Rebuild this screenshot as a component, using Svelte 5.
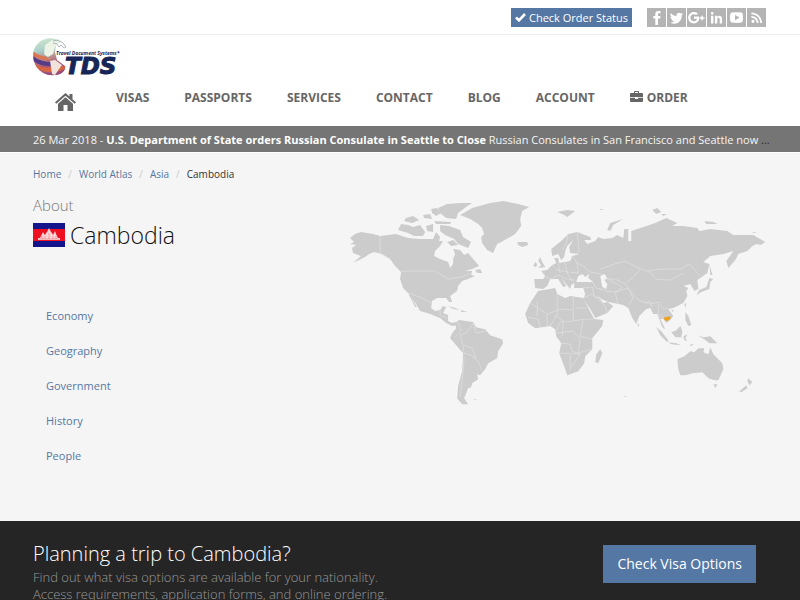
<script>
    const navItems = ["VISAS", "PASSPORTS", "SERVICES", "CONTACT", "BLOG", "ACCOUNT"];

    const social = [
        {
            name: "Facebook",
            path: "M11 17V10.600H13.200L13.500 8H11V6.500C11 5.700 11.300 5.300 12.200 5.300H13.500V3H11.500C9.200 3 8.300 4.200 8.300 6.100V8H6.300V10.600H8.300V17Z",
        },
        {
            name: "Twitter",
            path: "M16 6C15.500 6.300 15 6.400 14.400 6.500C15 6.100 15.400 5.600 15.600 4.900L13.800 5.600C11.900 3.700 8.900 5.200 9.500 8C7.200 7.900 5.200 6.900 3.800 5.100C3 6.500 3.500 8.200 4.700 9L3.500 8.700C3.500 10.100 4.400 11.200 5.700 11.600H4.500C4.900 12.600 5.800 13.300 7 13.400C5.900 14.200 4.600 14.500 3.200 14.400C8.600 17.700 14.900 14 14.700 7.400Z",
        },
        {
            name: "Google Plus",
            path: "M7 8.600H12.300C13 12.300 10.700 15.400 7 15.400C3.600 15.400 1.200 12.900 1.200 9.700C1.200 6.500 3.700 4 7 4C8.500 4 9.800 4.500 10.800 5.500L9.200 7C6.900 5 3.400 6.700 3.400 9.700C3.400 13.700 9.100 14.600 10 10.700H7ZM14.400 7.700H16V9.200H17.600V10.700H16V12.300H14.400V10.700H12.900V9.200H14.400Z",
        },
        {
            name: "LinkedIn",
            path: "M4 7.800H6.400V15.500H4ZM5.200 4A1.300 1.300 0 1 1 5.200 6.700A1.300 1.300 0 1 1 5.200 4ZM7.900 7.800H10.200V8.900C11.300 7 15.100 7.100 15.100 10.900V15.500H12.700V11.400C12.700 9 10.300 9.200 10.300 11.300V15.500H7.900Z",
        },
        {
            name: "YouTube",
            path: "M4.500 4.600Q9.500 3.900 14.500 4.600Q16 4.900 16 9.600Q16 14.300 14.500 14.600Q9.500 15.300 4.500 14.600Q3 14.300 3 9.600Q3 4.900 4.500 4.600ZM8 6.900V12.200L12.600 9.600Z",
        },
        {
            name: "RSS",
            path: "M6 11.700A1.600 1.600 0 1 1 6 14.900A1.600 1.600 0 1 1 6 11.700ZM4.400 8V9.800C7.500 9.900 9.600 12 9.800 15H11.600C11.400 11 8.500 8.100 4.400 8ZM4.400 4.500V6.300C9.500 6.500 13 10 13.200 15H15C14.800 9 10.400 4.700 4.400 4.500Z",
        },
    ];

    const crumbs = ["Home", "World Atlas", "Asia"];
    const topics = ["Economy", "Geography", "Government", "History", "People"];

    const land = [
        // north and central america
        "M350 237L355 233L361 231L373 233L380 235L388 234L396 233L402 235L408 237L420 238L433 238L436 231L440 236L439 240L443 240L440 245L435 250L434 255L440 258L448 261L450 267L453 263L453 258L455 253L453 248L460 249L464 254L468 252L473 258L479 265L472 268L465 270L472 270L471 274L475 275L468 278L462 280L458 285L457 290L450 295L452 301L449 301L446 297L437 297L432 300L431 307L435 310L440 309L443 305L446 306L443 312L448 314L448 320L452 322L455 321L458 324L452 325L446 322L440 317L430 313L420 310L416 303L411 297L417 306L415 306L408 292L403 287L400 278L401 271L395 265L390 258L382 253L374 251L369 253L365 256L353 262L361 255L353 252L352 247L356 244L350 243L354 241Z",
        // arctic islands
        "M398 229L401 223L408 224L413 226L420 224L425 231L423 235L414 235L408 232Z",
        "M406 217L413 215L419 219L412 222L404 220ZM423 214L430 213L432 218L424 217ZM426 225L433 223L433 231L427 230ZM434 220L451 221L450 223L436 223Z",
        "M438 207L447 203L460 202L472 202L466 206L458 212L456 218L446 217L440 212Z",
        "M440 224L449 225L460 229L463 236L471 241L468 247L458 243L454 238L445 234L440 230ZM447 241L453 239L458 244L451 245Z",
        "M431 208L437 207L441 212L436 215L432 212ZM475 269L480 268L482 272L477 272Z",
        // greenland and iceland
        "M460 214L472 207L490 202L503 200L518 203L529 206L522 210L520 218L521 225L515 233L503 240L497 243L493 252L487 249L482 242L481 236L484 233L482 227L478 223L470 218Z",
        "M517 241L527 241L528 244L522 246L518 244ZM448 305L455 307L460 309L453 308ZM461 309L467 311L461 311Z",
        // south america
        "M455 322L459 319L466 320L473 321L476 326L485 328L490 334L502 338L503 342L498 350L497 357L488 362L485 368L480 374L477 373L478 378L472 382L471 386L468 387L466 392L464 397L468 403L462 403L457 397L458 385L462 370L463 352L457 345L450 337L452 332L456 327Z",
        // africa and madagascar
        "M538 290L555 287L557 293L565 297L570 295L583 297L588 307L594 318L603 319L602 325L592 337L592 348L585 355L584 362L578 370L567 374L565 368L562 360L559 352L561 342L556 335L555 328L550 325L535 327L528 322L525 313L530 302ZM600 348L602 352L598 362L595 361L596 353Z",
        // europe and asia
        "M534 278L543 278L545 275L541 270L547 269L552 264L556 262L554 257L558 257L559 262L570 260L572 255L579 253L570 252L569 246L573 239L567 245L565 250L564 256L561 259L558 253L552 255L551 248L561 240L568 233L577 231L590 236L591 239L584 239L587 243L595 240L598 236L603 238L612 237L617 234L623 237L624 228L628 228L628 240L631 240L631 230L640 227L655 222L666 217L677 222L672 225L683 225L697 227L699 230L710 228L727 230L733 234L753 234L765 241L760 244L756 243L752 245L747 250L738 253L735 259L728 267L726 260L733 250L723 253L710 255L703 261L709 263L707 272L700 277L697 279L698 288L694 290L690 283L683 285L688 287L686 290L687 295L683 302L673 307L668 308L673 315L670 319L666 322L663 318L660 318L665 328L662 326L657 313L653 313L650 307L646 308L639 315L636 323L632 317L628 307L623 304L608 301L601 298L597 294L603 302L607 301L613 305L607 312L595 317L590 308L583 298L585 293L583 287L574 287L574 282L571 284L570 288L561 277L566 285L563 286L558 278L550 278L547 285L543 288L535 287Z",
        // british isles, svalbard, novaya zemlya, severnaya
        "M540 256L542 261L545 266L538 267L541 264L538 260ZM535 261L537 263L536 266L533 265ZM557 211L567 209L575 210L567 216L564 214ZM607 229L610 222L623 218L613 224L610 230ZM652 209L657 207L661 211L656 213ZM704 220L713 221L717 223L706 223ZM752 231L757 231L753 232ZM599 208L604 208L600 209ZM661 213L667 213L663 215Z",
        // japan, sakhalin, taiwan, philippines, sri lanka
        "M709 263L712 274L710 274ZM709 277L713 278L710 281L709 288L701 291L696 294L699 289L706 286ZM684 303L686 302L685 307ZM685 311L688 315L691 324L688 325L685 319ZM637 322L639 324L638 326ZM671 309L674 309L672 311Z",
        // indonesia and new guinea
        "M656 326L661 330L668 339L667 341L660 334ZM668 341L676 342L681 344L671 343ZM671 331L676 329L680 325L682 330L681 336L675 336ZM683 335L687 333L685 337L687 340L684 339ZM697 334L703 336L710 335L717 342L709 342L704 338ZM690 343L694 343L690 345Z",
        // australia, tasmania, new zealand
        "M677 358L684 355L690 350L694 351L698 347L704 347L703 351L708 353L710 346L713 353L718 358L722 362L723 368L718 379L714 379L708 377L705 374L702 371L692 372L685 374L680 374L678 368ZM713 383L717 383L715 387ZM748 377L752 381L749 384L747 380ZM746 384L747 387L741 391L739 390ZM474 398L477 398L474 399ZM624 395L627 395L625 396Z",
    ];

    const borders = [
        "M380 235V253L390 258M401 270H434L440 273L448 278L462 276L470 272M408 292L420 296L432 302M440 308V314L447 317",
        "M458 321L461 330L455 336M473 322L466 332L460 334L463 345L464 352L471 354L478 360L482 370M464 356L463 370L460 395M485 330L476 332L473 322M464 344L472 347L476 358",
        "M530 302L547 313L560 308L573 309M557 293V313L550 325M573 296V320L583 318L594 318M537 300V315M547 313V325M556 332L572 330L580 337L578 352L591 348M573 320L560 321L556 330M560 352L580 353L571 366M570 354V370M583 318L580 335L592 338M555 314L563 320L562 335M528 316L538 318L540 326M560 342L570 343L572 350L580 353M575 307L586 307",
        "M552 264L557 269L568 271L578 272L577 262L583 265L590 271L601 273M545 276L552 278L558 274L567 278L575 279M568 232L566 242L562 249M577 231L579 250L573 256L577 262M558 262L560 272M565 262L567 272L572 280M600 268L614 263L625 260L640 268L647 270M640 268L633 276L625 283L615 278L605 278M647 270L660 268L680 268L689 263L700 275M648 270L656 278L670 279L683 272M625 283L632 292L638 299L650 303L658 301L663 308L668 307M628 304L633 297L628 287L615 291L618 303M605 290L616 291L622 286L606 277M582 287L592 286L594 295L601 298M583 297L592 293L605 305L607 312M592 281L596 287L605 289M658 303V314L664 317M652 306L650 300L643 302",
    ];
</script>

<div class="page">
    <div class="topbar">
        <a class="status-btn" href="#status">
            <svg viewBox="0 0 11 10" aria-hidden="true">
                <path d="M1 5.500L4 8.300L10 2" fill="none" stroke="#fff" stroke-width="2.600" />
            </svg>
            Check Order Status
        </a>
        <div class="social">
            {#each social as item (item.name)}
                <a href="#social" aria-label={item.name}>
                    <svg viewBox="0 0 19 19"><path d={item.path} fill-rule="evenodd" /></svg>
                </a>
            {/each}
        </div>
    </div>

    <header>
        <a class="logo" href="#home" aria-label="Travel Document Systems">
            <svg viewBox="0 0 90 44">
                <defs>
                    <linearGradient id="globe" x1="0.400" y1="0" x2="0.600" y2="1">
                        <stop offset="0" stop-color="#cfe5cf" />
                        <stop offset="0.300" stop-color="#a9cfc9" />
                        <stop offset="0.500" stop-color="#b98a8c" />
                        <stop offset="0.700" stop-color="#a85570" />
                        <stop offset="1" stop-color="#806aa0" />
                    </linearGradient>
                    <clipPath id="disc">
                        <path d="M28 5C18 -3 3 2 .500 15C-2 31 12 42 27 37C31 35 33 32 32 29L24 23L22 15L23 7Z" />
                    </clipPath>
                </defs>
                <g clip-path="url(#disc)">
                    <rect width="36" height="40" fill="url(#globe)" />
                    <path d="M0 14Q5 19 15 20L18 23Q6 23 0 19Z" fill="#dd7650" />
                    <path d="M0 19Q8 25 18 25V29Q6 29 0 24Z" fill="#573b86" />
                    <path d="M2 27Q10 32 18 30L33 29L31 33Q16 38 5 32Z" fill="#d96543" />
                    <path d="M5 34Q17 39 32 32L29 38H10Z" fill="#9b4c76" />
                    <path d="M12 8L19 3L27 4L22 10L20 17L15 20L11 18Z" fill="#edf4e5" />
                    <path d="M17 24L22 23L29 28L26 32L22 38L19 37L18 30Z" fill="#f1e3dc" />
                </g>
                <path d="M20 4L25 3L30 6L33 10L31 11L28 8L26 10L24 7L20 6M10 17L14 20L17 22" fill="none" stroke="#97aaa7" stroke-width="0.800" />
                <text class="logo-tag" x="23" y="18">Travel Document Systems<tspan>*</tspan></text>
                <text class="logo-name" x="32" y="37">TDS</text>
            </svg>
        </a>
        <nav>
            <a class="home" href="#home" aria-label="Home">
                <svg viewBox="0 0 21 18">
                    <path d="M10.500 0L14.500 3.500V1H17.500V6.200L21 9.300L19.700 10.700L10.500 2.700L1.300 10.700L0 9.300ZM10.500 4.300L18 10.800V18H12.500V12H8.500V18H3V10.800Z" />
                </svg>
            </a>
            {#each navItems as item}
                <a href="#nav">{item}</a>
            {/each}
            <a class="order" href="#order">
                <svg viewBox="0 0 13 11" aria-hidden="true">
                    <path d="M4 2V.700Q4 0 4.700 0H8.300Q9 0 9 .700V2H12Q13 2 13 3V6H0V3Q0 2 1 2ZM5 1V2H8V1ZM0 6.800H5V8H8V6.800H13V10Q13 11 12 11H1Q0 11 0 10Z" fill-rule="evenodd" />
                </svg>
                ORDER
            </a>
        </nav>
    </header>

    <div class="ticker">
        <span>26 Mar 2018 - <b>U.S. Department of State orders Russian Consulate in Seattle to Close</b> Russian Consulates in San Francisco and Seattle now</span>
        ...
    </div>

    <main>
        <ol class="breadcrumb">
            {#each crumbs as crumb}
                <li><a href="#crumb">{crumb}</a></li>
            {/each}
            <li>Cambodia</li>
        </ol>
        <div class="columns">
            <section>
                <h1>
                    <small>About</small>
                    <span class="country">
                        <svg class="flag" viewBox="0 0 32 24" aria-hidden="true">
                            <rect width="32" height="24" fill="#14148c" />
                            <rect y="6" width="32" height="12" fill="#ee1020" />
                            <path d="M5 17V15H7L8 13L9 11L10 9L11 11L12 12L13 10L14 9L15 7L16 5L17 7L18 9L19 10L20 12L21 10L22 8L23 11L24 13L25 15H27V17Z" fill="#fbd5d5" />
                            <path d="M9 13V16M12 13V16M16 10V16M20 13V16M23 13V16M6 16H26" stroke="#ef7680" stroke-width="0.600" />
                        </svg>
                        Cambodia
                    </span>
                </h1>
                <ul class="topics">
                    {#each topics as topic}
                        <li><a href="#topic">{topic}</a></li>
                    {/each}
                </ul>
            </section>
            <svg class="map" viewBox="348 198 419 208" role="img" aria-label="World map">
                {#each land as shape}
                    <path class="land" d={shape} />
                {/each}
                {#each borders as line}
                    <path class="border" d={line} />
                {/each}
                <!-- black sea and caspian -->
                <path class="water" d="M576 281L578 275L582 273L585 276L589 273L588 277L593 281L586 281ZM600 275L604 273L607 277L604 279L607 283L606 288L602 286Z" />
                <path class="here" d="M664 316L667 316L670 315L670 318L667 320L664 319Z" />
            </svg>
        </div>
    </main>

    <footer>
        <div>
            <h2>Planning a trip to Cambodia?</h2>
            <p>Find out what visa options are available for your nationality.<br />Access requirements, application forms, and online ordering.</p>
        </div>
        <a class="visa-btn" href="#visa">Check Visa Options</a>
    </footer>
</div>

<style>
    :global(body) {
        margin: 0;
        background: #252525;
    }

    .page {
        font-family: "Open Sans", "Liberation Sans", sans-serif;
        font-size: 11px;
        line-height: 17px;
        color: #333;
        background: #f5f5f5;
    }

    a {
        color: #5577a3;
        text-decoration: none;
    }

    svg {
        display: block;
    }

    .topbar {
        display: flex;
        justify-content: flex-end;
        align-items: center;
        gap: 15px;
        height: 34px;
        padding: 0 34px;
        background: #fff;
        border-bottom: 1px solid #eee;
    }

    .status-btn {
        display: flex;
        align-items: center;
        gap: 3px;
        padding: 1px 4px;
        color: #fff;
        background: #5577a3;
    }

    .status-btn svg {
        width: 11px;
        height: 10px;
    }

    .social {
        display: flex;
        gap: 1px;
    }

    .social a {
        width: 19px;
        height: 19px;
        background: #b4b4b4;
    }

    .social path {
        fill: #fff;
    }

    header {
        padding: 2px 33px 0;
        background: #fff;
    }

    .logo {
        display: block;
        width: 90px;
        height: 44px;
    }

    .logo-tag {
        font: italic bold 5px "Open Sans", sans-serif;
        fill: #172557;
    }

    .logo-name {
        font: italic bold 23px "DejaVu Sans", sans-serif;
        fill: #172557;
        stroke: #172557;
        stroke-width: 1;
    }

    nav {
        display: flex;
        gap: 35px;
        padding: 8px 22px 15px;
        font-size: 12px;
    }

    nav a {
        font-weight: bold;
        color: #666;
    }

    nav path {
        fill: #666;
    }

    .home {
        padding-top: 4px;
        margin-right: 5px;
    }

    .home svg {
        width: 21px;
        height: 18px;
    }

    .order {
        display: flex;
        gap: 4px;
    }

    .order svg {
        width: 13px;
        height: 11px;
        margin-top: 2px;
    }

    .ticker {
        padding: 5px 33px 4px;
        white-space: nowrap;
        overflow: hidden;
        background: #757575;
        border-bottom: 1px solid #fff;
    }

    .ticker span {
        color: #f5f5f5;
    }

    .ticker b {
        color: #fff;
    }

    main {
        padding: 13px 33px 48px;
    }

    ol,
    ul {
        margin: 0;
        padding: 0;
        list-style: none;
    }

    .breadcrumb {
        display: flex;
        font-size: 10px;
    }

    .breadcrumb li + li::before {
        content: "/";
        padding: 0 7px;
        color: #ccc;
    }

    .columns {
        display: grid;
        grid-template-columns: 3fr 4fr;
    }

    h1 {
        margin: 12px 0 43px;
        font-size: 23px;
        font-weight: 300;
        line-height: 40px;
        color: #111;
    }

    h1 small {
        display: block;
        font-size: 15px;
        line-height: 20px;
        color: #777;
    }

    .country {
        display: flex;
        align-items: center;
        gap: 5px;
    }

    .flag {
        width: 32px;
        height: 24px;
    }

    .topics li {
        padding: 9px 13px;
    }

    .map {
        width: 100%;
        margin-top: 16px;
    }

    .land {
        fill: #ccc;
    }

    .border {
        fill: none;
        stroke: #e4e4e4;
        stroke-width: 0.6;
    }

    .water {
        fill: #f5f5f5;
    }

    .here {
        fill: #f0a21c;
    }

    footer {
        display: flex;
        justify-content: space-between;
        align-items: flex-start;
        padding: 18px 44px 24px 33px;
        background: #252525;
    }

    h2 {
        margin: 0;
        font-size: 20px;
        font-weight: 300;
        line-height: 30px;
        color: #fff;
    }

    p {
        margin: 0;
        font-size: 13px;
        font-weight: 300;
        color: #999;
    }

    .visa-btn {
        margin-top: 6px;
        padding: 9px 14px;
        font-size: 14px;
        line-height: 20px;
        color: #fff;
        background: #5577a3;
    }
</style>
